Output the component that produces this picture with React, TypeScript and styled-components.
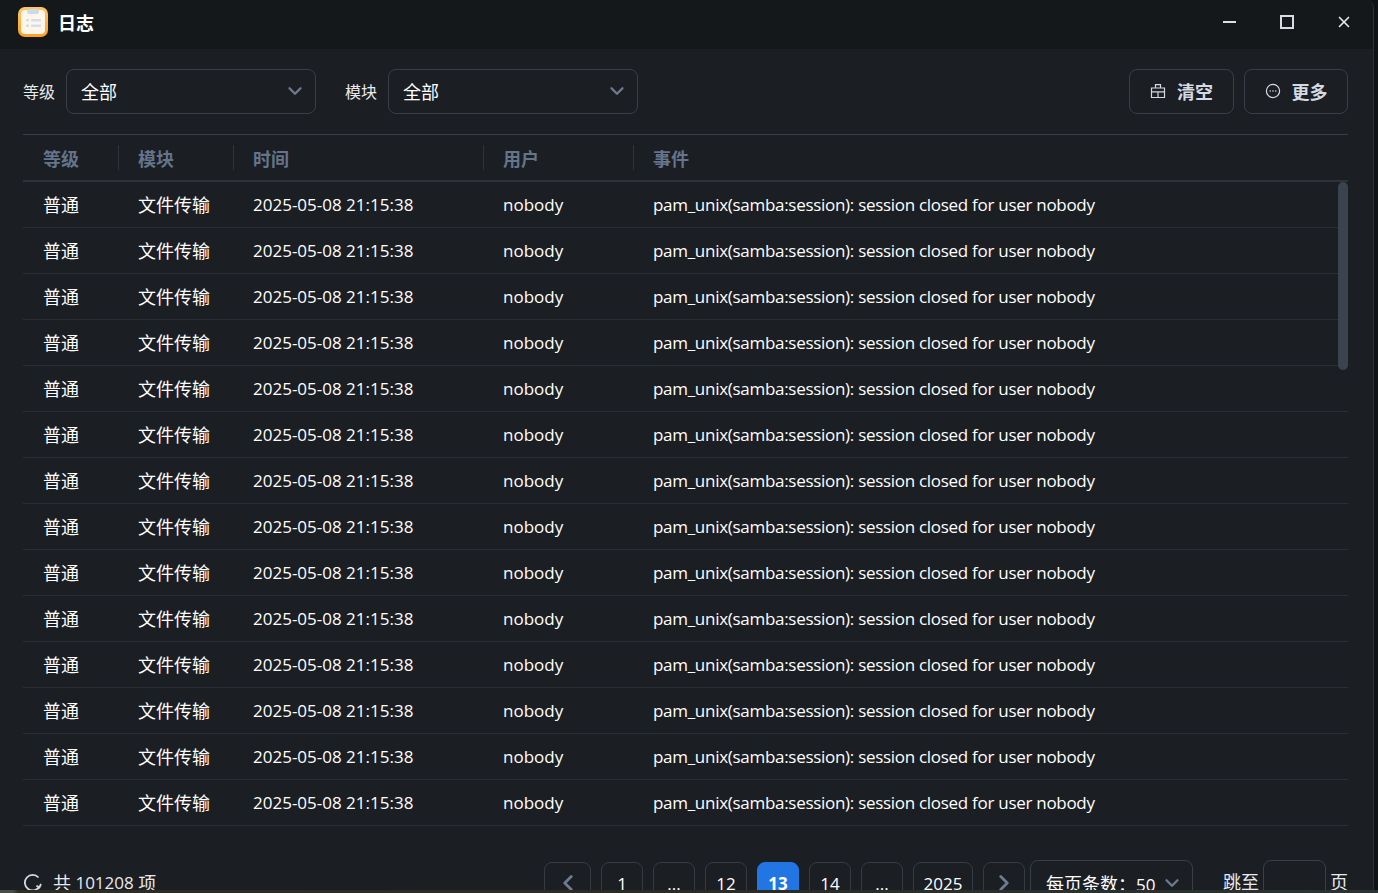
import React from 'react'
import styled, { createGlobalStyle } from 'styled-components'
import { ChevronDown, ChevronLeft, ChevronRight, X } from 'lucide-react'

const GlobalStyle = createGlobalStyle`
  html, body {
    margin: 0;
    height: 893px;
    overflow: hidden;
    background: #0f1215;
  }
  * {
    box-sizing: border-box;
  }
`

const Screen = styled.div`
  width: 1378px;
  height: 893px;
  overflow: hidden;
  display: flex;
  flex-direction: column;
  background: #101316;
`

const Window = styled.div`
  width: 1374px;
  height: 890px;
  flex: none;
  overflow: hidden;
  display: flex;
  flex-direction: column;
  background: #1b1e23;
  border-right: 1px solid #2c3038;
  border-top-right-radius: 8px;
  color: #fff;
  font-family: 'Open Sans', 'Noto Sans CJK SC', sans-serif;
  font-size: 18px;
`

const Desktop = styled.div`
  height: 3px;
  flex: none;
  background: linear-gradient(90deg, #4a4e42 0, #4a4e42 13px, #2c2e22 18px, #2a2c24 50%, #2a3432 100%);
`

const TitleBar = styled.div`
  height: 49px;
  flex: none;
  display: flex;
  align-items: center;
  padding: 0 0 5px 18px;
  background: #15181b;
`

const Title = styled.div`
  margin-left: 10px;
  padding-top: 1px;
  font-size: 18px;
  font-weight: 700;
  line-height: 24px;
  color: #fff;
`

const WinButtons = styled.div`
  margin-left: auto;
  display: flex;
  align-items: center;
  padding-right: 1px;
`

const WinButton = styled.div`
  width: 57px;
  height: 44px;
  display: flex;
  align-items: center;
  justify-content: center;
  color: #e4e7ec;
`

const MinusBar = styled.div`
  width: 13px;
  height: 2px;
  background: #dcdfe4;
`

const MaxBox = styled.div`
  width: 14px;
  height: 14px;
  border: 2px solid #d8dbe0;
`

const Body = styled.div`
  flex: 1;
  display: flex;
  flex-direction: column;
  padding: 20px 25px 0 23px;
`

const Toolbar = styled.div`
  height: 45px;
  flex: none;
  display: flex;
  align-items: center;
`

const FieldLabel = styled.span<{ $gap?: number }>`
  width: 33px;
  margin-left: ${(p) => p.$gap ?? 0}px;
  margin-right: 10px;
  font-size: 16px;
  line-height: 22px;
  white-space: nowrap;
  color: #e8eaee;
`

const SelectBox = styled.div<{ $width: number }>`
  width: ${(p) => p.$width}px;
  height: 45px;
  display: flex;
  align-items: center;
  justify-content: space-between;
  padding: 0 9px 1px 14px;
  border: 1px solid #3a3f47;
  border-radius: 8px;
  color: #fff;
  flex: none;
  svg {
    color: #6d7a8f;
  }
`

const ToolButton = styled.div<{ $width: number; $gap?: number }>`
  width: ${(p) => p.$width}px;
  margin-left: ${(p) => p.$gap ?? 0}px;
  height: 45px;
  display: flex;
  align-items: center;
  justify-content: center;
  gap: 11px;
  padding-bottom: 1px;
  border: 1px solid #3a3f47;
  border-radius: 8px;
  font-weight: 700;
  color: #d5dae2;
`

const Spacer = styled.div`
  flex: 1;
`

const Table = styled.div`
  margin-top: 20px;
  border-top: 1px solid #3a3f47;
  flex: none;
  position: relative;
`

const gridColumns = '95px 115px 250px 150px 1fr'

const HeadRow = styled.div`
  height: 47px;
  display: grid;
  grid-template-columns: ${gridColumns};
  align-items: center;
  border-bottom: 2px solid #2f3238;
`

const HeadCell = styled.div<{ $divider?: boolean }>`
  height: 25px;
  line-height: 29px;
  padding-left: 20px;
  font-weight: 700;
  color: #64748b;
  position: relative;
  &::before {
    content: '';
    display: ${(p) => (p.$divider ? 'block' : 'none')};
    position: absolute;
    left: 0;
    top: 0;
    width: 1px;
    height: 25px;
    background: #2f333a;
  }
`

const DataRow = styled.div`
  height: 46px;
  display: grid;
  grid-template-columns: ${gridColumns};
  align-items: center;
  border-bottom: 1px solid #2b2e34;
`

const Cell = styled.div`
  padding-left: 20px;
  white-space: nowrap;
  color: #fff;
  line-height: 24px;
`

const LatinCell = styled(Cell)<{ $tight?: boolean }>`
  font-size: 17px;
  letter-spacing: ${(p) => (p.$tight ? '-0.29px' : '0')};
`

const ScrollThumb = styled.div`
  position: absolute;
  right: 0;
  top: 47px;
  width: 10px;
  height: 188px;
  border-radius: 5px;
  background: #3b444e;
`

const Footer = styled.div`
  margin-top: 34px;
  display: flex;
  align-items: flex-start;
  height: 44px;
  font-size: 17px;
`

const Cjk = styled.span`
  font-size: 18px;
`

const Total = styled.div`
  display: flex;
  align-items: center;
  padding-top: 11px;
  line-height: 24px;
  white-space: pre;
  color: #e8eaee;
`

const TotalIcon = styled.span`
  display: flex;
  margin-right: 10px;
`

const Pager = styled.div`
  margin-left: auto;
  padding-top: 2px;
  display: flex;
  gap: 10px;
`

const PageButton = styled.div<{ $active?: boolean; $width?: number }>`
  width: ${(p) => p.$width ?? 42}px;
  height: 44px;
  padding-bottom: 2px;
  display: flex;
  align-items: center;
  justify-content: center;
  border: 1px solid ${(p) => (p.$active ? '#2176e3' : '#363b43')};
  border-radius: 8px;
  background: ${(p) => (p.$active ? '#2176e3' : 'transparent')};
  font-weight: ${(p) => (p.$active ? 700 : 400)};
  color: #fff;
  svg {
    color: #6d7a8f;
  }
`

const PageSize = styled(SelectBox)`
  margin-left: 5px;
  padding: 0 9px 0 15px;
  white-space: pre;
`

const JumpLabel = styled.span<{ $left: number }>`
  margin-left: ${(p) => p.$left}px;
  padding-top: 9px;
  font-size: 18px;
  line-height: 26px;
  color: #e8eaee;
`

const JumpInput = styled.div`
  width: 63px;
  height: 45px;
  margin: 0 4px;
  border: 1px solid #3a3f47;
  border-radius: 8px;
`

const LogoIcon = () => (
  <svg width="30" height="30" viewBox="0 0 30 30">
    <defs>
      <linearGradient id="logoEdge" x1="0" y1="0" x2="0" y2="1">
        <stop offset="0" stopColor="#ffc46b" />
        <stop offset="1" stopColor="#ff9f24" />
      </linearGradient>
    </defs>
    <rect width="30" height="30" rx="7" fill="url(#logoEdge)" />
    <rect x="3" y="3" width="24" height="24" rx="4" fill="#fff6e8" />
    <rect x="9" y="2" width="12" height="5" rx="2.5" fill="#c9dbea" />
    <g fill="#cfe0ee">
      <rect x="8" y="12" width="3" height="2.4" rx="0.6" />
      <rect x="13" y="12" width="10" height="2.4" rx="0.6" />
      <rect x="8" y="17.5" width="3" height="2.4" rx="0.6" />
      <rect x="13" y="17.5" width="10" height="2.4" rx="0.6" />
    </g>
  </svg>
)

const ClearIcon = () => (
  <svg width="16" height="16" viewBox="0 0 16 16" fill="none" stroke="currentColor" strokeWidth="1.2">
    <path d="M1.5 5h13v9.5h-13zM5.5 5V1.6h5V5M1.5 8.8h13M8 8.8v5.7" />
  </svg>
)

const MoreIcon = () => (
  <svg width="16" height="16" viewBox="0 0 16 16" fill="none" stroke="currentColor" strokeWidth="1.2">
    <circle cx="8" cy="8" r="6.6" />
    <g fill="currentColor" stroke="none">
      <circle cx="5.2" cy="8" r="0.8" />
      <circle cx="8" cy="8" r="0.8" />
      <circle cx="10.8" cy="8" r="0.8" />
    </g>
  </svg>
)

const RefreshIcon = () => (
  <svg width="20" height="20" viewBox="0 0 20 20" fill="none" stroke="#d5dae2" strokeWidth="1.8">
    <path d="M16.5 13.5A7.8 7.8 0 1 1 15.5 4.5" />
    <path d="M18 11l-1.6 3.4-3-1.6" />
  </svg>
)

const rows = Array.from({ length: 14 }, (_, i) => i)

export default function App() {
  return (
    <>
      <GlobalStyle />
      <Screen>
        <Window>
          <TitleBar>
            <LogoIcon />
            <Title>日志</Title>
            <WinButtons>
              <WinButton><MinusBar /></WinButton>
              <WinButton><MaxBox /></WinButton>
              <WinButton><X size={18} strokeWidth={2.2} /></WinButton>
            </WinButtons>
          </TitleBar>
          <Body>
            <Toolbar>
              <FieldLabel>等级</FieldLabel>
              <SelectBox $width={250}>全部<ChevronDown size={22} strokeWidth={2.6} /></SelectBox>
              <FieldLabel $gap={29}>模块</FieldLabel>
              <SelectBox $width={250}>全部<ChevronDown size={22} strokeWidth={2.6} /></SelectBox>
              <Spacer />
              <ToolButton $width={105}><ClearIcon />清空</ToolButton>
              <ToolButton $width={104} $gap={10}><MoreIcon />更多</ToolButton>
            </Toolbar>
            <Table>
              <HeadRow>
                <HeadCell>等级</HeadCell>
                <HeadCell $divider>模块</HeadCell>
                <HeadCell $divider>时间</HeadCell>
                <HeadCell $divider>用户</HeadCell>
                <HeadCell $divider>事件</HeadCell>
              </HeadRow>
              {rows.map((i) => (
                <DataRow key={i}>
                  <Cell>普通</Cell>
                  <Cell>文件传输</Cell>
                  <LatinCell>2025-05-08 21:15:38</LatinCell>
                  <LatinCell>nobody</LatinCell>
                  <LatinCell $tight>pam_unix(samba:session): session closed for user nobody</LatinCell>
                </DataRow>
              ))}
              <ScrollThumb />
            </Table>
            <Footer>
              <Total>
                <TotalIcon><RefreshIcon /></TotalIcon>
                <Cjk>共</Cjk> 101208 <Cjk>项</Cjk>
              </Total>
              <Pager>
                <PageButton $width={47}><ChevronLeft size={26} strokeWidth={2.6} /></PageButton>
                <PageButton>1</PageButton>
                <PageButton>...</PageButton>
                <PageButton>12</PageButton>
                <PageButton $active>13</PageButton>
                <PageButton>14</PageButton>
                <PageButton>...</PageButton>
                <PageButton $width={60}>2025</PageButton>
                <PageButton><ChevronRight size={26} strokeWidth={2.6} /></PageButton>
              </Pager>
              <PageSize $width={163}>
                <span><Cjk>每页条数：</Cjk>50</span>
                <ChevronDown size={22} strokeWidth={2.6} />
              </PageSize>
              <JumpLabel $left={30}>跳至</JumpLabel>
              <JumpInput />
              <JumpLabel $left={0}>页</JumpLabel>
            </Footer>
          </Body>
        </Window>
        <Desktop />
      </Screen>
    </>
  )
}
